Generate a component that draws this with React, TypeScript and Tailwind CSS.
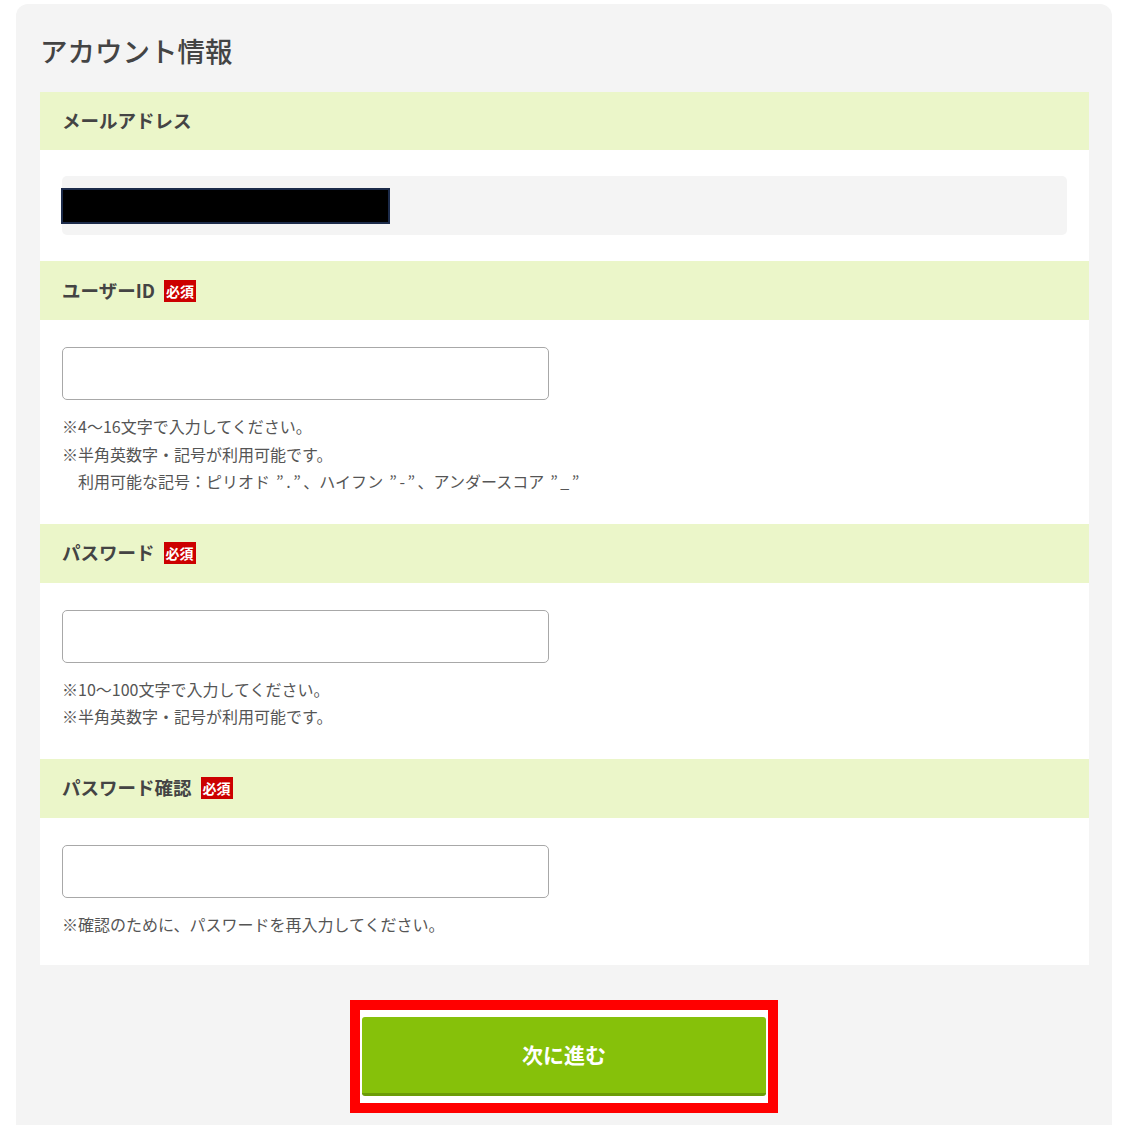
import React from "react";

const q = "mx-[2.5px]";

const notesUser: React.ReactNode[] = [
  "※4～16文字で入力してください。",
  "※半角英数字・記号が利用可能です。",
  <>
    {"　利用可能な記号：ピリオド "}
    <span className={q}>”</span>.<span className={q}>”</span>、ハイフン <span className={q}>”</span>-
    <span className={q}>”</span>、アンダースコア <span className={q}>”</span>_<span className={q}>”</span>
  </>,
];
const notesPass = ["※10～100文字で入力してください。", "※半角英数字・記号が利用可能です。"];
const notesConfirm = ["※確認のために、パスワードを再入力してください。"];

function Badge() {
  return (
    <span className="ml-[9px] inline-flex h-[22px] items-center bg-[#cc0000] px-[2px] text-[14px] font-bold leading-none text-white">
      必須
    </span>
  );
}

function SectionHeader({ label, required, h }: { label: string; required?: boolean; h?: string }) {
  return (
    <div className={`flex items-center bg-[#ebf6c9] pl-[22px] ${h ?? "h-[59px]"}`}>
      <span className="text-[18.5px] font-bold text-[#444]">{label}</span>
      {required && <Badge />}
    </div>
  );
}

function Field({ label, notes, last }: { label: string; notes: React.ReactNode[]; last?: boolean }) {
  return (
    <section>
      <SectionHeader label={label} required />
      <div className={`px-[22px] pt-[27px] ${last ? "pb-[27px]" : "pb-[28px]"}`}>
        <input
          type="text"
          className="block h-[53px] w-[487px] rounded-[5px] border border-[#a8a8a8] bg-white outline-none"
        />
        <div className="mt-[13px] text-[16px] leading-[27.5px] text-[#555]">
          {notes.map((n, i) => (
            <p key={i} className="whitespace-pre">{n}</p>
          ))}
        </div>
      </div>
    </section>
  );
}

export default function App() {
  return (
    <div className="min-h-screen overflow-hidden bg-white pt-[4px] pl-[16px] font-['Noto_Sans_CJK_JP','Noto_Sans',sans-serif]">
      <div className="w-[1096px] rounded-t-[12px] bg-[#f4f4f4] px-[24px] pb-[40px]">
        <div className="flex h-[88px] items-center pt-[6px]">
          <h1 className="text-[27.5px] font-medium text-[#444]">アカウント情報</h1>
        </div>

        <div className="w-[1049px] bg-white">
          <section>
            <SectionHeader label="メールアドレス" h="h-[58px]" />
            <div className="px-[22px] py-[26px]">
              <div className="flex h-[59px] items-center rounded-[5px] bg-[#f4f4f4]">
                <div className="-ml-[1px] h-[36px] w-[329px] border-2 border-[#1c2b4a] bg-black" />
              </div>
            </div>
          </section>

          <Field label="ユーザーID" notes={notesUser} />
          <Field label="パスワード" notes={notesPass} />
          <Field label="パスワード確認" notes={notesConfirm} last />
        </div>

        <div className="mt-[35px] flex justify-center">
          <div className="border-[10px] border-[#ff0000] bg-white px-[2px] py-[7px]">
            <button
              type="button"
              className="flex h-[79px] w-[404px] items-center justify-center rounded-[3px] border-b-[3px] border-[#6b9c07] bg-[#86c10a] text-[21px] font-bold text-white"
            >
              次に進む
            </button>
          </div>
        </div>
      </div>
    </div>
  );
}
